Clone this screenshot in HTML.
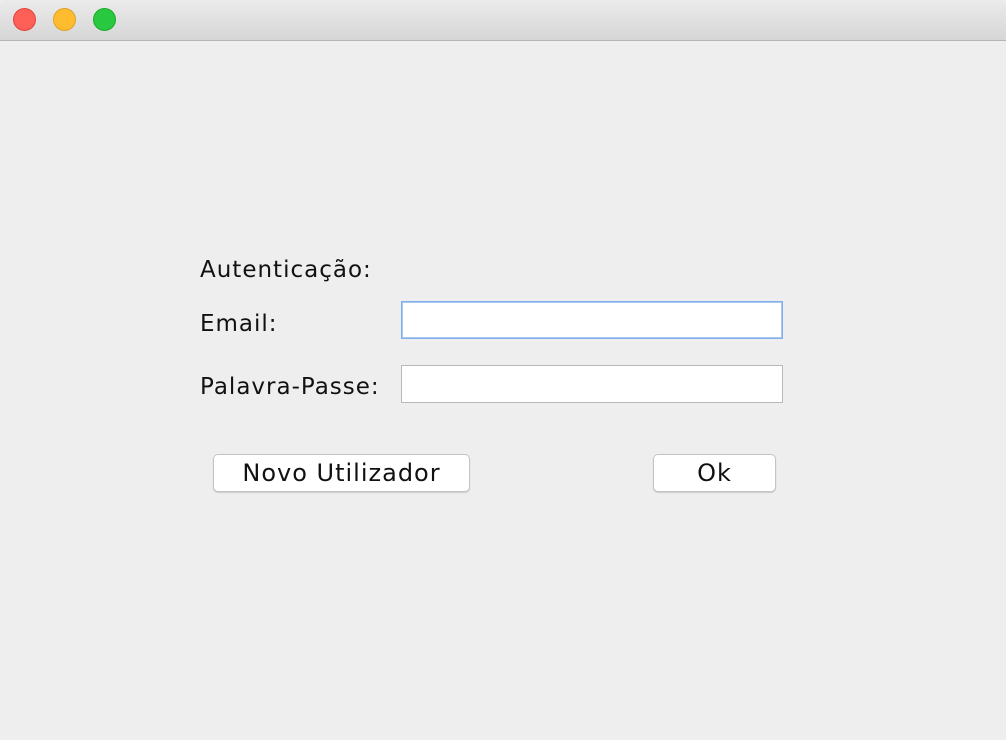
<!DOCTYPE html>
<html><head><meta charset="utf-8"><style>
body{margin:0;width:1006px;height:740px;background:#eeeeee;position:relative;overflow:hidden;font-family:"DejaVu Sans","Liberation Sans",sans-serif;}
.tb{position:absolute;left:0;top:0;width:1006px;height:40px;background:linear-gradient(#ebebeb,#d6d6d6);border-bottom:1px solid #b5b5b5;border-radius:5px 5px 0 0;}
.c{position:absolute;top:8px;width:22px;height:22px;border-radius:50%;}
.t{position:absolute;font-size:23px;letter-spacing:1px;color:#111;line-height:26px;white-space:nowrap;}
.f{position:absolute;left:401px;width:380px;background:#fff;border:1px solid #b8b8b8;}
.b{position:absolute;top:454px;height:36px;background:#fff;border:1px solid #c4c4c4;border-radius:5px;box-shadow:0 1px 1px rgba(0,0,0,.15);font-size:24px;letter-spacing:1px;text-align:center;line-height:36px;color:#111;}
</style></head><body>
<div class="tb">
<div class="c" style="left:13px;background:#fe5f57;border:1px solid #e0443e;width:21px;height:21px"></div>
<div class="c" style="left:53px;background:#febc2e;border:1px solid #dea123;width:21px;height:21px"></div>
<div class="c" style="left:93px;background:#28c840;border:1px solid #1aab29;width:21px;height:21px"></div>
</div>
<div class="t" style="left:200px;top:257px">Autenticação:</div>
<div class="t" style="left:200px;top:311px">Email:</div>
<div class="t" style="left:200px;top:374px">Palavra-Passe:</div>
<div class="f" style="top:301px;height:36px;border-color:#7eaef0;box-shadow:0 0 0 1px #a9c9f5 inset"></div>
<div class="f" style="top:365px;height:36px"></div>
<div class="b" style="left:213px;width:255px">Novo Utilizador</div>
<div class="b" style="left:653px;width:121px">Ok</div>
</body></html>
